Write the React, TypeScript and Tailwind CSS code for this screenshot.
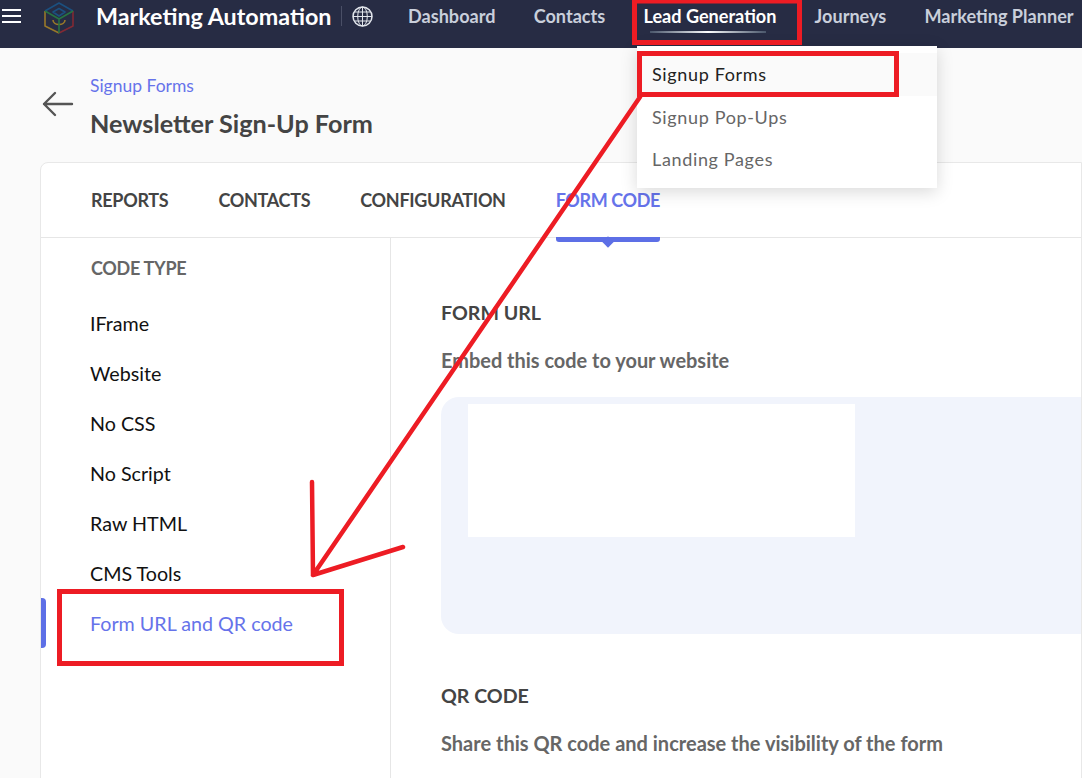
const navItems = ["Dashboard", "Contacts", "Lead Generation", "Journeys", "Marketing Planner"];
const tabs = ["REPORTS", "CONTACTS", "CONFIGURATION", "FORM CODE"];
const codeTypes = ["IFrame", "Website", "No CSS", "No Script", "Raw HTML", "CMS Tools"];

function Logo() {
  return (
    <svg width="30" height="32" viewBox="-1 -1 30 32" fill="none" strokeWidth="1.6" strokeLinejoin="round">
      <path d="M0 8 L14 0 L28 8" stroke="#1b5080" />
      <path d="M0 8 V23 L14 30" stroke="#98782a" />
      <path d="M14 30 L28 23 V8" stroke="#822a34" />
      <path d="M8 9 L14 5.5 L20 9 L14 13 Z" stroke="#1b5080" />
      <path d="M8 17 C8 23 20 23 20 17" stroke="#98782a" />
      <path d="M0 8 L14 16 L28 8 M14 16 V30" stroke="#277443" />
    </svg>
  );
}

function GlobeIcon() {
  return (
    <svg width="21" height="21" viewBox="0 0 21 21" fill="none" stroke="#e2e6ec" strokeWidth="1" className="ml-[10px] shrink-0">
      <circle cx="10.5" cy="10.5" r="9.5" strokeWidth="1.5" />
      <ellipse cx="10.5" cy="10.5" rx="4.8" ry="9.5" />
      <path d="M10.5 1 V20 M1 10.5 H20 M2.4 6 H18.6 M2.4 15 H18.6" />
    </svg>
  );
}

function Annotations() {
  return (
    <svg className="absolute left-0 top-0 pointer-events-none" width="1082" height="778" viewBox="0 0 1082 778" fill="none" stroke="#ed1c24">
      <rect x="634.5" y="1" width="165" height="41.5" strokeWidth="5" />
      <rect x="639.5" y="53.5" width="257" height="41" strokeWidth="5" />
      <rect x="59.5" y="591.5" width="282" height="72" strokeWidth="5" />
      <path d="M640 97 L313 575 M313 575 L312 482 M313 575 L403 547" strokeWidth="4.5" strokeLinecap="round" strokeLinejoin="round" />
    </svg>
  );
}

export default function App() {
  return (
    <div className="relative w-[1082px] h-[778px] overflow-hidden bg-[#fafafa] font-['Lato',sans-serif]">
      <header className="flex items-center h-12 bg-[#272c44] pb-[16px]">
        <div className="ml-[2px] w-[19px] flex flex-col gap-[4px] shrink-0">
          <span className="h-[2px] bg-white" />
          <span className="h-[2px] bg-white" />
          <span className="h-[2px] bg-white" />
        </div>
        <div className="ml-[23px] w-[30px] mt-[4px] shrink-0">
          <Logo />
        </div>
        <span className="ml-[22px] w-[235px] shrink-0 text-[23.3px] leading-8 font-bold text-white whitespace-nowrap">Marketing Automation</span>
        <span className="ml-[10px] w-px h-5 bg-[#4a4f66] shrink-0" />
        <GlobeIcon />
        <nav className="ml-[35px] flex gap-[38.2px] shrink-0">
          {navItems.map((item) => (
            <div
              key={item}
              className={`relative text-[18.1px] leading-6 font-bold whitespace-nowrap ${item === "Lead Generation" ? "text-white" : "text-[#c9cfdb]"}`}
            >
              {item}
              {item === "Lead Generation" && (
                <span className="absolute left-[7px] right-[10px] -bottom-[5px] h-[2px] bg-gradient-to-r from-[#4a566b] via-white to-[#4a566b]" />
              )}
            </div>
          ))}
        </nav>
      </header>

      <div className="flex items-center h-[114px] pl-[42px]">
        <svg width="32" height="26" viewBox="0 0 32 26" fill="none" stroke="#555" strokeWidth="2.4" strokeLinecap="round" strokeLinejoin="round" className="-mt-[3px] shrink-0">
          <path d="M2 13 H30 M13 2 L2 13 L13 24" />
        </svg>
        <div className="ml-[16px] mt-[2px]">
          <div className="text-[17.5px] leading-6 text-[#6673ea]">Signup Forms</div>
          <h1 className="mt-[9px] text-[25.2px] leading-8 font-bold text-[#444]">Newsletter Sign-Up Form</h1>
        </div>
      </div>

      <div className="ml-10 h-[620px] bg-white border border-[#e8e8e8] rounded-tl-lg">
        <div className="flex h-[75px] items-center gap-[50px] pl-[50px] border-b border-[#e6e6e6]">
          {tabs.map((tab) => (
            <div
              key={tab}
              className={`relative text-[18px] leading-6 font-bold ${tab === "FORM CODE" ? "text-[#6673ea] tracking-[-0.4px]" : "text-[#444] tracking-[-0.3px]"}`}
            >
              {tab}
              {tab === "FORM CODE" && (
                <span className="absolute left-0 right-0 top-[49px] h-[5px] bg-[#5d6fe6] rounded-b-[3px]">
                  <span className="absolute left-1/2 top-[1px] w-[8px] h-[8px] -ml-[4px] rotate-45 bg-[#5d6fe6]" />
                </span>
              )}
            </div>
          ))}
        </div>

        <div className="flex">
          <aside className="relative w-[350px] h-[545px] shrink-0 border-r border-[#e6e6e6] pl-[50px] pt-[18px]">
            <div className="text-[18px] leading-6 font-bold tracking-[-0.3px] text-[#666]">CODE TYPE</div>
            <ul className="mt-[19px] -ml-px flex flex-col">
              {codeTypes.map((type) => (
                <li key={type} className="h-[50px] flex items-center text-[19.7px] text-[#111]">
                  {type}
                </li>
              ))}
              <li className="h-[50px] flex items-center text-[19.7px] text-[#6673ea]">Form URL and QR code</li>
            </ul>
            <span className="absolute left-0 top-[360px] w-[5px] h-[50px] bg-[#5d6fe6] rounded-r-[4px]" />
          </aside>

          <main className="flex-1 pl-[50px] pt-[63px] overflow-hidden">
            <h2 className="text-[19.6px] leading-6 font-bold text-[#444]">FORM URL</h2>
            <p className="mt-[23px] text-[19.95px] leading-6 font-bold text-[#666]">Embed this code to your website</p>
            <div className="mt-[25px] h-[237px] w-[700px] bg-[#f1f4fc] rounded-l-[18px] pl-[27px] pt-[7px]">
              <div className="w-[387px] h-[133px] bg-white" />
            </div>
            <h2 className="mt-[50px] text-[19.6px] leading-6 font-bold text-[#444]">QR CODE</h2>
            <p className="mt-[23px] text-[20px] leading-6 font-bold text-[#666]">Share this QR code and increase the visibility of the form</p>
          </main>
        </div>
      </div>

      <div className="absolute left-[637px] top-[46px] w-[300px] h-[142px] bg-white shadow-[0_4px_16px_rgba(0,0,0,0.15)] pt-[7px]">
        <div className="h-[43px] flex items-center pl-[15px] bg-[#fafafa] text-[18px] tracking-[0.65px] text-[#222]">Signup Forms</div>
        <div className="h-[42px] flex items-center pl-[15px] text-[18px] tracking-[0.65px] text-[#666]">Signup Pop-Ups</div>
        <div className="h-[42px] flex items-center pl-[15px] text-[18px] tracking-[0.65px] text-[#666]">Landing Pages</div>
      </div>

      <Annotations />
    </div>
  );
}
